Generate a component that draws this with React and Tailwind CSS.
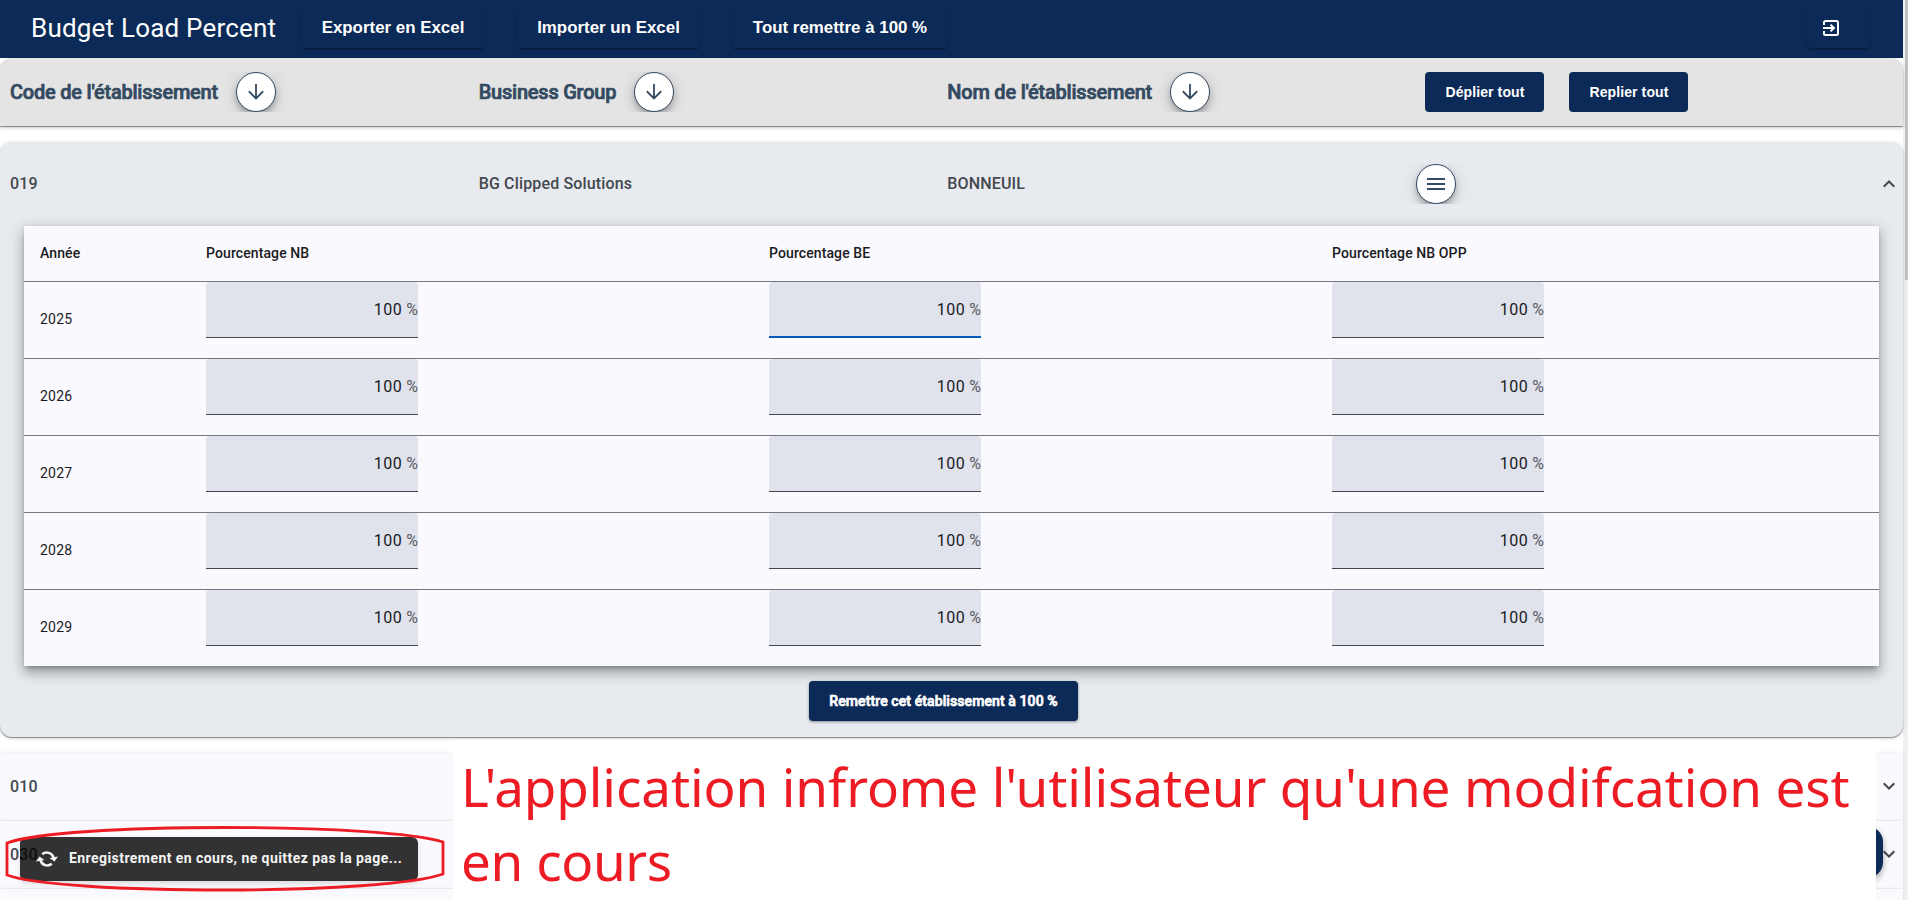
import React from "react";

const YEARS = [2025, 2026, 2027, 2028, 2029];

function RoundButton({ children }) {
  return (
    <span className="flex h-10 overflow-hidden px-10 -mx-10">
      <span className="flex size-10 items-center justify-center rounded-full border border-[#344a61] bg-white text-[#344a61] shadow-[0_3px_5px_-1px_rgba(0,0,0,0.2),0_6px_10px_0_rgba(0,0,0,0.14),0_1px_18px_0_rgba(0,0,0,0.12)]">
        {children}
      </span>
    </span>
  );
}

function SortHeader({ label, width }) {
  return (
    <div className="flex w-[468.67px] items-center">
      <span className={"whitespace-nowrap text-xl leading-6 font-medium tracking-[-0.22px] text-[#344a61] [-webkit-text-stroke:0.7px_#344a61] " + width}>{label}</span>
      <RoundButton>
        <svg viewBox="0 0 24 24" className="size-6" fill="currentColor">
          <path d="M11.1 4v12.2l-5.6-5.6L4.2 12l7.8 7.8 7.8-7.8-1.3-1.4-5.6 5.6V4z" />
        </svg>
      </RoundButton>
    </div>
  );
}

function Chevron({ up }) {
  return (
    <svg viewBox="0 0 12 8" className="mr-2 h-2 w-3" fill="none" stroke="#44474e" strokeWidth="2">
      <path d={up ? "M0.7 6.8L6 1.5l5.3 5.3" : "M0.7 1.2L6 6.5l5.3-5.3"} />
    </svg>
  );
}

function NavButton({ children, width }) {
  return (
    <button className={"flex h-10 items-center justify-center rounded-[5px] pb-px font-['Liberation_Sans',sans-serif] text-[16.9px] font-bold whitespace-nowrap text-white shadow-[0_3px_1px_-2px_rgba(0,0,0,0.2),0_2px_2px_0_rgba(0,0,0,0.12),0_1px_3px_0_rgba(0,0,0,0.06)] " + width}>
      {children}
    </button>
  );
}

function PercentField({ focused }) {
  return (
    <div className="w-[563px] shrink-0">
      <div className={"flex h-14 w-[212px] items-start justify-end rounded-t-[4px] bg-[#e0e2ec] pt-4 " + (focused ? "border-b-2 border-[#005cbb]" : "border-b border-[#44474e]")}>
        <span className="text-base leading-6 tracking-[0.5px] text-[#1a1b1f]">100</span>
        <span className="ml-1 text-base leading-6 text-[#5a5c63]">%</span>
      </div>
    </div>
  );
}

function CollapsedRow({ code, height }) {
  return (
    <div className={"flex items-start justify-between bg-[#faf9fd] shadow-[0_0_3px_rgba(0,0,0,0.12)] " + height}>
      <span className="pt-[22px] pl-[10px] text-base leading-6 font-medium tracking-[0.15px] text-[#44474e]">{code}</span>
      {code && (
        <span className="pt-[29px] leading-none">
          <Chevron />
        </span>
      )}
    </div>
  );
}

export default function App() {
  return (
    <div className="flex h-[900px] w-[1908px] overflow-hidden bg-white font-[Roboto,sans-serif]">
      <div className="relative flex w-[1903px] flex-col">
        <header className="flex h-[58px] shrink-0 items-start bg-[#0c2a57] pt-2 pl-[31px]">
          <h1 className="w-[270px] pt-1 text-[26px] leading-8 font-normal tracking-[0.2px] whitespace-nowrap text-white">Budget Load Percent</h1>
          <NavButton width="w-[184px] mr-8">Exporter en Excel</NavButton>
          <NavButton width="w-[183px] mr-8">Importer un Excel</NavButton>
          <NavButton width="w-[216px]">Tout remettre à 100 %</NavButton>
          <NavButton width="w-[64px] ml-auto mr-8 pr-[17px]">
            <svg viewBox="0 0 16 16" className="size-4" fill="none" stroke="white" strokeWidth="2">
              <path d="M1 5V2.5Q1 1 2.5 1h11Q15 1 15 2.5v11Q15 15 13.500 15h-11Q1 15 1 13.500V11" />
              <path d="M0 8h11M7.500 4.600L11 8l-3.500 3.400" />
            </svg>
          </NavButton>
        </header>

        <section className="flex h-[68px] shrink-0 items-center rounded-t-xl bg-[#e4e4e4] pl-[10px] shadow-[0_1px_1px_rgba(0,0,0,0.4),0_2px_4px_rgba(0,0,0,0.18)]">
          <SortHeader label="Code de l'établissement" width="w-[226px]" />
          <SortHeader label="Business Group" width="w-[155px]" />
          <SortHeader label="Nom de l'établissement" width="w-[223px]" />
          <div className="flex gap-[25px] pl-[9px]">
            {["Déplier tout", "Replier tout"].map((t) => (
              <button key={t} className="h-10 w-[119px] rounded-[4px] bg-[#0c2a57] pl-px font-['Liberation_Sans',sans-serif] text-sm font-bold tracking-[0.1px] text-white">
                {t}
              </button>
            ))}
          </div>
        </section>

        <section className="mt-4 flex h-[595px] shrink-0 flex-col rounded-xl bg-[#e7ebef] shadow-[0_1px_1px_rgba(0,0,0,0.4),0_1px_4px_rgba(0,0,0,0.18)]">
          <div className="flex h-[84px] items-center pl-[10px] text-base font-medium tracking-[0.15px] text-[#44474e]">
            <span className="w-[468.67px]">019</span>
            <span className="w-[468.67px]">BG Clipped Solutions</span>
            <span className="w-[468.67px]">BONNEUIL</span>
            <RoundButton>
              <svg viewBox="0 0 18 12" className="h-3 w-[18px]" fill="currentColor">
                <path d="M0 0h18v2H0zM0 5h18v2H0zM0 10h18v2H0z" />
              </svg>
            </RoundButton>
            <span className="ml-auto">
              <Chevron up />
            </span>
          </div>

          <div className="mx-6 h-[440px] bg-[#faf9fd] shadow-[0_5px_5px_-3px_rgba(0,0,0,0.24),0_8px_10px_1px_rgba(0,0,0,0.16),0_3px_14px_2px_rgba(0,0,0,0.14),0_1px_4px_rgba(0,0,0,0.08)]">
            <div className="flex h-14 items-center border-b border-[#74777f] pb-px pl-4 text-sm font-medium tracking-[0.1px] text-[#1a1b1f]">
              <span className="w-[166px]">Année</span>
              <span className="w-[563px]">Pourcentage NB</span>
              <span className="w-[563px]">Pourcentage BE</span>
              <span>Pourcentage NB OPP</span>
            </div>
            {YEARS.map((year) => (
              <div key={year} className="flex h-[77px] items-start border-b border-[#74777f] pl-4 last:h-[76px] last:border-b-0">
                <span className="w-[166px] shrink-0 pt-[27px] text-sm leading-5 tracking-[0.25px] text-[#1a1b1f]">{year}</span>
                <PercentField />
                <PercentField focused={year === 2025} />
                <PercentField />
              </div>
            ))}
          </div>

          <button className="mt-[15px] ml-[809px] h-10 w-[269px] rounded-[4px] bg-[#0c2a57] pb-px text-sm font-medium tracking-[0.1px] whitespace-nowrap text-white [-webkit-text-stroke:0.7px_white] shadow-[0_1px_3px_rgba(0,0,0,0.4)]">
            Remettre cet établissement à 100 %
          </button>
        </section>

        <section className="mt-4 flex flex-col gap-px">
          <CollapsedRow code="010" height="h-[67px]" />
          <CollapsedRow code="030" height="h-[67px]" />
          <CollapsedRow code="" height="h-[12px]" />
        </section>

        <div className="absolute top-[826px] left-[1827px] h-[52px] w-14 rounded-2xl bg-[#0c2a57] shadow-[0_3px_6px_rgba(0,0,0,0.35)]" />

        <div className="absolute top-[740px] left-[453px] h-[160px] w-[1423px] bg-white pt-[10px] pl-[8px]">
          <p className="font-['Noto_Sans','Open_Sans',sans-serif] text-[53px] leading-[74px] tracking-[-0.1px] whitespace-nowrap text-[#ed1c24]">
            L'application infrome l'utilisateur qu'une modifcation est
            <br />
            <span className="tracking-[-0.4px]">en cours</span>
          </p>
        </div>

        <div className="absolute top-[837px] left-5 flex h-11 w-[398px] items-center rounded-md bg-black/80 pl-4 shadow-[0_3px_5px_rgba(0,0,0,0.12)]">
          <svg viewBox="0 0 22 18" className="h-[18px] w-[22px]" fill="none" stroke="#f4f4f4" strokeWidth="2.600">
            <path d="M6.200 4.200A7 7 0 0 1 17.600 8" />
            <path d="M15.800 13.800A7 7 0 0 1 4.400 10" />
            <path d="M0 11.500L3.500 6.500l5 3.500zM13.500 8l5 3.500L22 6.500z" fill="#f4f4f4" stroke="none" />
          </svg>
          <span className="ml-[11px] pb-0.5 text-sm font-bold tracking-[0.44px] whitespace-nowrap text-[#f4f4f4]">Enregistrement en cours, ne quittez pas la page...</span>
        </div>

        <svg viewBox="0 0 442 68" className="absolute top-[825px] left-1 h-[68px] w-[442px]" fill="none" stroke="#ed1c24" strokeWidth="2.800">
          <path d="M3 18C30 8 120 2.500 221 2.500s190 5.500 218 14.500v32c-28 10-118 16-218 16S30 60 3 50z" />
        </svg>
      </div>

      <div className="flex w-[5px] flex-col bg-[#f1f1f1] pl-[2px]">
        <div className="h-[280px] bg-[#c1c1c1]" />
      </div>
    </div>
  );
}
